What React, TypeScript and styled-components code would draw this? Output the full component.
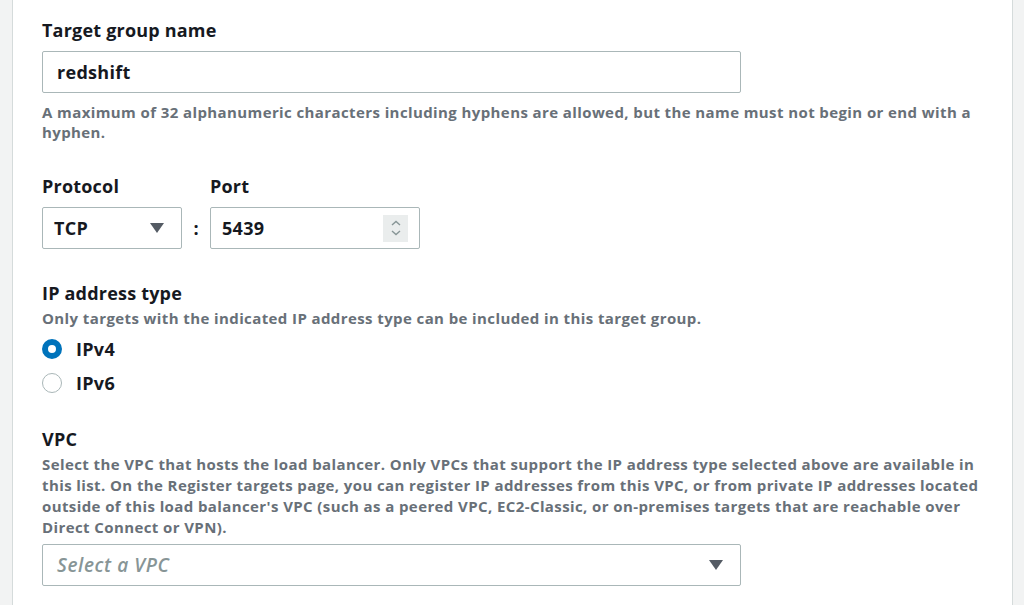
import React, { useState } from "react";
import styled, { createGlobalStyle } from "styled-components";

const GlobalStyle = createGlobalStyle`
  html, body {
    margin: 0;
    padding: 0;
    background: #f2f3f3;
    font-family: "Open Sans", "Noto Sans", "Liberation Sans", sans-serif;
  }
  * { box-sizing: border-box; }
`;

const Panel = styled.div`
  margin: 0 11px 0 12px;
  background: #ffffff;
  border-left: 1px solid #d5dbdb;
  border-right: 1px solid #d5dbdb;
  min-height: 605px;
  padding: 18px 29px 0 29px;
  color: #16191f;
`;

const Field = styled.div<{ $gap?: number }>`
  margin-bottom: ${(p) => p.$gap ?? 0}px;
`;

const Label = styled.div`
  font-size: 18px;
  font-weight: 700;
  line-height: 24px;
  letter-spacing: 0.2px;
  color: #16191f;
`;

const Hint = styled.div<{ $lh?: number; $top?: number }>`
  font-size: 15px;
  font-weight: 700;
  line-height: ${(p) => p.$lh ?? 20}px;
  margin-top: ${(p) => p.$top ?? 0}px;
  letter-spacing: 0.4px;
  color: #687078;
`;

const Spacer = styled.div<{ $h: number }>`
  height: ${(p) => p.$h}px;
`;

const TextBox = styled.div<{ $width: number; $pad?: number }>`
  width: ${(p) => p.$width}px;
  height: 42px;
  border: 1px solid #aab7b8;
  border-radius: 2px;
  display: flex;
  align-items: center;
  padding: 0 11px 0 ${(p) => p.$pad ?? 11}px;
  background: #fff;
`;

const Row = styled.div`
  display: flex;
  align-items: flex-end;
`;

const Column = styled.div`
  display: flex;
  flex-direction: column;
  gap: 9px;
`;

const Colon = styled.div`
  width: 28px;
  height: 42px;
  display: flex;
  align-items: center;
  justify-content: center;
  font-size: 18px;
  font-weight: 700;
`;

const Value = styled.span<{ $placeholder?: boolean }>`
  flex: 1;
  font-style: ${(p) => (p.$placeholder ? "italic" : "normal")};
  font-weight: ${(p) => (p.$placeholder ? 600 : 700)};
  color: ${(p) => (p.$placeholder ? "#879596" : "#16191f")};
  font-size: ${(p) => (p.$placeholder ? 19 : 18)}px;
  letter-spacing: ${(p) => (p.$placeholder ? 0.6 : 0.3)}px;
`;

const Caret = styled.span`
  width: 0;
  height: 0;
  border-left: 7px solid transparent;
  border-right: 7px solid transparent;
  border-top: 10px solid #545b64;
  margin-right: 6px;
`;

const Stepper = styled.div`
  width: 25px;
  height: 27px;
  background: #eaeded;
  display: flex;
  align-items: center;
  justify-content: center;
`;

const RadioList = styled.div`
  display: flex;
  flex-direction: column;
  gap: 14px;
  margin-top: 11px;
`;

const RadioRow = styled.label`
  display: flex;
  align-items: center;
  gap: 14px;
  font-size: 18px;
  font-weight: 700;
  letter-spacing: 0.3px;
  height: 20px;
  cursor: pointer;
`;

const Dot = styled.span<{ $on: boolean }>`
  width: 20px;
  height: 20px;
  border-radius: 50%;
  border: ${(p) => (p.$on ? "6px solid #0073bb" : "1.5px solid #aab7b8")};
  background: #fff;
`;

export default function App() {
  const [ip, setIp] = useState("IPv4");

  return (
    <>
      <GlobalStyle />
      <Panel>
        <Field $gap={32}>
          <Label>Target group name</Label>
          <Spacer $h={9} />
          <TextBox $width={699} $pad={14}>
            <Value>redshift</Value>
          </TextBox>
          <Spacer $h={9} />
          <Hint>
            A maximum of 32 alphanumeric characters including hyphens are allowed, but the name must not begin or end
            with a hyphen.
          </Hint>
        </Field>

        <Field $gap={32}>
          <Row>
            <Column>
              <Label>Protocol</Label>
              <TextBox $width={140}>
                <Value>TCP</Value>
                <Caret />
              </TextBox>
            </Column>
            <Colon>:</Colon>
            <Column>
              <Label>Port</Label>
              <TextBox $width={210}>
                <Value>5439</Value>
                <Stepper>
                  <svg width="12" height="18" viewBox="0 0 12 18" fill="none" stroke="#879596" strokeWidth="1.4">
                    <path d="M2 6 L6 2.5 L10 6" />
                    <path d="M2 12 L6 15.5 L10 12" />
                  </svg>
                </Stepper>
              </TextBox>
            </Column>
          </Row>
        </Field>

        <Field $gap={34}>
          <Label>IP address type</Label>
          <Hint $top={3}>Only targets with the indicated IP address type can be included in this target group.</Hint>
          <RadioList>
            {["IPv4", "IPv6"].map((v) => (
              <RadioRow key={v} onClick={() => setIp(v)}>
                <Dot $on={ip === v} />
                {v}
              </RadioRow>
            ))}
          </RadioList>
        </Field>

        <Field>
          <Label>VPC</Label>
          <Hint $lh={21} $top={3}>
            Select the VPC that hosts the load balancer. Only VPCs that support the IP address type selected above are
            available in this list. On the Register targets page, you can register IP addresses from this VPC, or from
            private IP addresses located outside of this load balancer's VPC (such as a peered VPC, EC2-Classic, or
            on-premises targets that are reachable over Direct Connect or VPN).
          </Hint>
          <Spacer $h={6} />
          <TextBox $width={699} $pad={14}>
            <Value $placeholder>Select a VPC</Value>
            <Caret />
          </TextBox>
        </Field>
      </Panel>
    </>
  );
}
